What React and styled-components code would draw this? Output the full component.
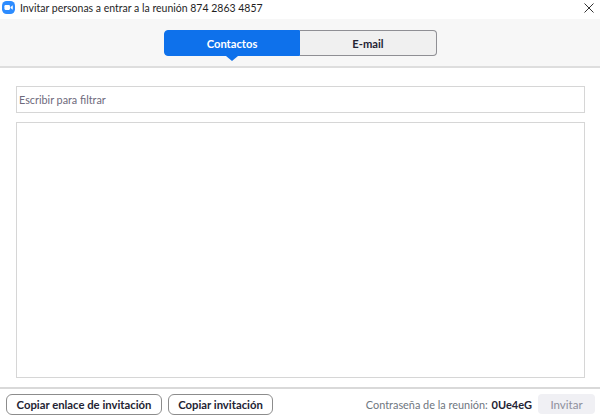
import React from 'react';
import styled, { createGlobalStyle } from 'styled-components';

const GlobalStyle = createGlobalStyle`
  html, body {
    margin: 0;
    padding: 0;
    background: #ffffff;
  }
  * {
    box-sizing: border-box;
  }
`;

const Window = styled.div`
  width: 600px;
  height: 419px;
  display: flex;
  flex-direction: column;
  overflow: hidden;
  background: #ffffff;
  font-family: Lato, "Open Sans", sans-serif;
  color: #1f1f1f;
`;

const TitleBar = styled.div`
  height: 19px;
  flex: none;
  display: flex;
  align-items: center;
  padding: 0 6px 4px 2px;
`;

const Title = styled.span`
  flex: 1;
  margin-left: 5px;
  font-size: 10.5px;
  white-space: nowrap;
`;

const TabArea = styled.div`
  height: 49px;
  flex: none;
  display: flex;
  justify-content: center;
  padding: 11px 0 0 1px;
  background: #f7f7f7;
  border-bottom: 2px solid #dedede;
`;

const Tab = styled.div`
  position: relative;
  width: ${props => props.$width}px;
  height: 26px;
  display: flex;
  align-items: center;
  justify-content: center;
  font-size: 11.2px;
  font-weight: 700;
  color: ${props => (props.$active ? '#ffffff' : '#232333')};
  background: ${props => (props.$active ? '#0e71eb' : '#f0f0f0')};
  border: 1px solid ${props => (props.$active ? '#0e71eb' : '#8f8f94')};
  border-left-width: ${props => (props.$active ? 1 : 0)}px;
  border-radius: ${props => (props.$active ? '4px 0 0 4px' : '0 4px 4px 0')};
`;

const Caret = styled.span`
  position: absolute;
  left: 50%;
  bottom: -6px;
  margin-left: -6px;
  border-left: 6px solid transparent;
  border-right: 6px solid transparent;
  border-top: 5px solid #0e71eb;
`;

const Body = styled.div`
  flex: 1;
  min-height: 0;
  display: flex;
  flex-direction: column;
  gap: 9px;
  padding: 18px 15px 9px 16px;
  border-bottom: 2px solid #d9d9d9;
`;

const FilterInput = styled.div`
  height: 27px;
  flex: none;
  display: flex;
  align-items: center;
  padding: 0 2px;
  border: 1px solid #d6d6d6;
  font-size: 10.8px;
  color: #6e6a7c;
`;

const ContactList = styled.div`
  flex: 1;
  border: 1px solid #d6d6d6;
`;

const Footer = styled.div`
  height: 30px;
  flex: none;
  display: flex;
  align-items: center;
  padding: 0 5px 0 6px;
`;

const CopyButton = styled.div`
  width: ${props => props.$width}px;
  height: 21px;
  margin-right: 6px;
  display: flex;
  align-items: center;
  justify-content: center;
  border: 1px solid #8c8c8c;
  border-radius: 6px;
  font-size: 11.3px;
  font-weight: 700;
  white-space: nowrap;
  color: #232333;
`;

const Passcode = styled.div`
  margin-left: auto;
  margin-right: 6px;
  font-size: 10.9px;
  color: #6e7680;
  white-space: nowrap;

  b {
    font-size: 11px;
    font-weight: 700;
    color: #232333;
    margin-left: 1px;
  }
`;

const InviteButton = styled.div`
  width: 57px;
  height: 20px;
  display: flex;
  align-items: center;
  justify-content: center;
  border-radius: 4px;
  background: #f0f0f4;
  font-size: 11.5px;
  color: #8f8f9c;
`;

const AppIcon = () => (
  <svg width="13" height="13" viewBox="0 0 14 14" aria-hidden="true">
    <rect x="0" y="0" width="14" height="14" rx="5" fill="#2d8cff" />
    <rect x="2.6" y="4.4" width="6" height="5.2" rx="1.2" fill="#ffffff" />
    <path d="M9.2 6.4 L11.6 4.6 V9.4 L9.2 7.6 Z" fill="#ffffff" />
  </svg>
);

const CloseIcon = () => (
  <svg width="10" height="10" viewBox="0 0 10 10" aria-hidden="true">
    <path d="M0.5 0.5 L9.5 9.5 M9.5 0.5 L0.5 9.5" stroke="#333333" strokeWidth="1" fill="none" />
  </svg>
);

const App = () => (
  <Window>
    <GlobalStyle />
    <TitleBar>
      <AppIcon />
      <Title>Invitar personas a entrar a la reunión 874 2863 4857</Title>
      <CloseIcon />
    </TitleBar>
    <TabArea>
      <Tab $active $width={136}>
        Contactos
        <Caret />
      </Tab>
      <Tab $width={137}>E-mail</Tab>
    </TabArea>
    <Body>
      <FilterInput>Escribir para filtrar</FilterInput>
      <ContactList />
    </Body>
    <Footer>
      <CopyButton $width={156}>Copiar enlace de invitación</CopyButton>
      <CopyButton $width={105}>Copiar invitación</CopyButton>
      <Passcode>
        Contraseña de la reunión: <b>0Ue4eG</b>
      </Passcode>
      <InviteButton>Invitar</InviteButton>
    </Footer>
  </Window>
);

export default App;
